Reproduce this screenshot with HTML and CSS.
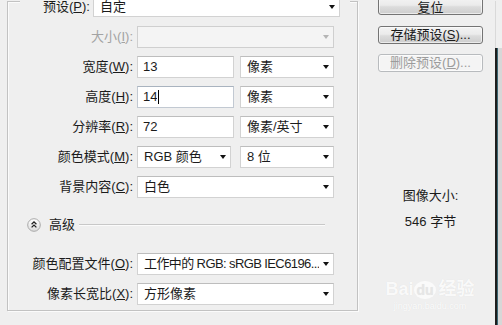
FILE: index.html
```html
<!DOCTYPE html>
<html lang="zh-CN">
<head>
<meta charset="utf-8">
<title>新建</title>
<link rel="stylesheet" href="styles.css">
</head>
<body>
<div class="dialog">
  <div class="group">
    <div class="preset">
      <span class="preset-label">预设(<u>P</u>):</span>
      <div class="field select w247"><span class="val">自定</span><span class="arrow"></span></div>
    </div>
    <div class="rows">
      <div class="row">
        <span class="label disabled">大小(<u>I</u>):</span>
        <div class="field select disabled w197"><span class="val"></span><span class="arrow"></span></div>
      </div>
      <div class="row">
        <span class="label">宽度(<u>W</u>):</span>
        <div class="field w97"><span class="val">13</span></div>
        <div class="field select w94 ml6"><span class="val">像素</span><span class="arrow"></span></div>
      </div>
      <div class="row">
        <span class="label">高度(<u>H</u>):</span>
        <div class="field focus w97"><span class="val">14</span><span class="caret"></span></div>
        <div class="field select w94 ml6"><span class="val">像素</span><span class="arrow"></span></div>
      </div>
      <div class="row">
        <span class="label">分辨率(<u>R</u>):</span>
        <div class="field w97"><span class="val">72</span></div>
        <div class="field select w94 ml6"><span class="val">像素/英寸</span><span class="arrow"></span></div>
      </div>
      <div class="row">
        <span class="label">颜色模式(<u>M</u>):</span>
        <div class="field select w94"><span class="val">RGB 颜色</span><span class="arrow"></span></div>
        <div class="field select w94 ml9"><span class="val">8 位</span><span class="arrow"></span></div>
      </div>
      <div class="row">
        <span class="label">背景内容(<u>C</u>):</span>
        <div class="field select w197"><span class="val">白色</span><span class="arrow"></span></div>
      </div>
    </div>
    <div class="adv">
      <svg class="adv-icon" width="14" height="14" viewBox="0 0 14 14">
        <defs>
          <linearGradient id="g" x1="0" y1="0" x2="0" y2="1">
            <stop offset="0" stop-color="#ffffff"/>
            <stop offset="1" stop-color="#dcdcdc"/>
          </linearGradient>
        </defs>
        <circle cx="7" cy="7" r="6.3" fill="url(#g)" stroke="#a9a9a9" stroke-width="1"/>
        <path d="M4.6 6.2 L7 3.9 L9.4 6.2 M4.6 9.4 L7 7.1 L9.4 9.4" fill="none" stroke="#222" stroke-width="1.3"/>
      </svg>
      <span class="adv-text">高级</span>
      <span class="adv-line"></span>
    </div>
    <div class="rows rows2">
      <div class="row">
        <span class="label">颜色配置文件(<u>O</u>):</span>
        <div class="field select w197"><span class="val tight">工作中的 RGB: sRGB IEC6196...</span><span class="arrow"></span></div>
      </div>
      <div class="row">
        <span class="label">像素长宽比(<u>X</u>):</span>
        <div class="field select w197"><span class="val">方形像素</span><span class="arrow"></span></div>
      </div>
    </div>
  </div>
  <div class="side">
    <div class="btn reset">复位</div>
    <div class="btn save">存储预设(<u>S</u>)...</div>
    <div class="btn del">删除预设(<u>D</u>)...</div>
    <div class="info-title">图像大小:</div>
    <div class="info-size">546 字节</div>
  </div>
  <div class="edge">
    <div class="edge-top"></div>
    <div class="edge-bot"></div>
  </div>
</div>
<div class="watermark">
  <div class="wm-main">Bai<span class="wm-du">du</span>经验</div>
  <div class="wm-sub">jingyan.baidu.com</div>
</div>
</body>
</html>
```

FILE: styles.css
```css
* { box-sizing: border-box; }
html, body { margin: 0; padding: 0; }
body {
  width: 502px;
  height: 325px;
  overflow: hidden;
  position: relative;
  background: #efefef;
  color: #1b1b1b;
  font-family: "Liberation Sans", "Noto Sans CJK SC", sans-serif;
  font-size: 13px;
  line-height: 16px;
}
u { text-decoration: underline; text-underline-offset: 1px; }

.dialog {
  display: flex;
  height: 100%;
  padding-top: 1px;
}

.group {
  margin-left: 7px;
  width: 351px;
  height: 310px;
  border: 1px solid #c2c2c2;
  box-shadow: 1px 1px 0 #fbfbfb, inset 1px 1px 0 #fbfbfb;
  display: flex;
  flex-direction: column;
  flex: none;
}

.preset {
  display: flex;
  align-items: center;
  margin: -5px 0 0 12px;
  width: 330px;
  height: 20px;
  padding-left: 23px;
  background: #efefef;
}
.preset-label { width: 50px; flex: none; }

.rows {
  display: flex;
  flex-direction: column;
  gap: 8px;
  margin-top: 9px;
}
.rows2 { margin-top: 20px; }
.row {
  display: flex;
  align-items: center;
  height: 22px;
}
.label {
  width: 129px;
  flex: none;
  text-align: right;
  padding-right: 4px;
  white-space: nowrap;
}
.label.disabled { color: #a3a3a3; }

.field {
  height: 22px;
  flex: none;
  display: flex;
  align-items: center;
  background: #fff;
  border: 1px solid #d2d2d2;
  border-top-color: #bdbdbd;
  padding: 0 4px 0 5px;
  white-space: nowrap;
  overflow: hidden;
}
.preset .field { height: 20px; }
.field.select { padding-left: 6px; }
.field.disabled { background: #f4f4f4; border-color: #cfcfcf; }
.field.focus { border-color: #c2c9d2; border-top-color: #a9b3bf; }
.val { flex: 1; overflow: hidden; }
.val.tight { letter-spacing: -0.6px; }
.caret {
  display: inline-block;
  width: 1px;
  height: 14px;
  background: #000;
  margin-left: 1px;
  margin-right: auto;
}
.focus .val { flex: none; }
.arrow {
  flex: none;
  width: 0;
  height: 0;
  border-left: 3.5px solid transparent;
  border-right: 3.5px solid transparent;
  border-top: 4px solid #111;
  margin-left: 4px;
}
.disabled .arrow { border-top-color: #b5b5b5; }

.w247 { width: 247px; }
.w197 { width: 197px; }
.w97 { width: 97px; }
.w94 { width: 94px; }
.ml6 { margin-left: 6px; }
.ml9 { margin-left: 9px; }

.adv {
  display: flex;
  align-items: center;
  height: 16px;
  margin: 19px 32px 0 19px;
}
.adv-icon { flex: none; display: block; }
.adv-text { margin-left: 8px; }
.adv-line {
  flex: 1;
  margin-left: 4px;
  height: 2px;
  border-top: 1px solid #c8c8c8;
  border-bottom: 1px solid #fbfbfb;
}

.side {
  margin-left: 20px;
  width: 105px;
  flex: none;
  display: flex;
  flex-direction: column;
}
.btn {
  height: 18px;
  border: 1px solid #747474;
  border-radius: 3px;
  background: linear-gradient(#f3f3f3 0%, #ebebeb 45%, #dcdcdc 55%, #cdcdcd 100%);
  box-shadow: inset 0 0 0 1px rgba(255,255,255,0.6);
  text-align: center;
  line-height: 16px;
  white-space: nowrap;
}
.btn.reset { margin-top: -4px; padding-top: 2px; }
.btn.save { margin-top: 11px; }
.btn.del {
  margin-top: 10px;
  border-color: #b8bbbe;
  background: #f4f4f4;
  color: #9c9c9c;
}
.info-title { margin-top: 116px; text-align: center; }
.info-size { margin-top: 10px; text-align: center; }

.edge {
  margin-left: auto;
  width: 7px;
  flex: none;
  display: flex;
  flex-direction: column;
}
.edge-top { height: 47px; border-left: 1px solid #d9d9d9; }
.edge-bot {
  flex: 1;
  background: linear-gradient(to right, #1d1d1d 0 2px, #3a6672 2px 3px, #d7d7d7 3px);
}

.watermark {
  position: absolute;
  left: 384px;
  top: 280px;
  width: 92px;
  text-align: center;
  color: rgba(255,255,255,0.85);
  text-shadow: 0 0 1px rgba(0,0,0,0.08);
  pointer-events: none;
}
.wm-main {
  font-family: "Liberation Sans", "Noto Sans CJK SC", sans-serif;
  font-size: 18px;
  line-height: 18px;
  font-weight: bold;
  white-space: nowrap;
}
.wm-du {
  display: inline-block;
  background: rgba(255,255,255,0.7);
  color: #e6e6e6;
  border-radius: 50%;
  padding: 0 2px;
  margin: 0 3px 0 1px;
  font-size: 14px;
}
.wm-sub {
  font-family: "Liberation Sans", sans-serif;
  font-size: 9px;
  line-height: 10px;
  margin-top: 2px;
  color: rgba(255,255,255,0.9);
}
```
